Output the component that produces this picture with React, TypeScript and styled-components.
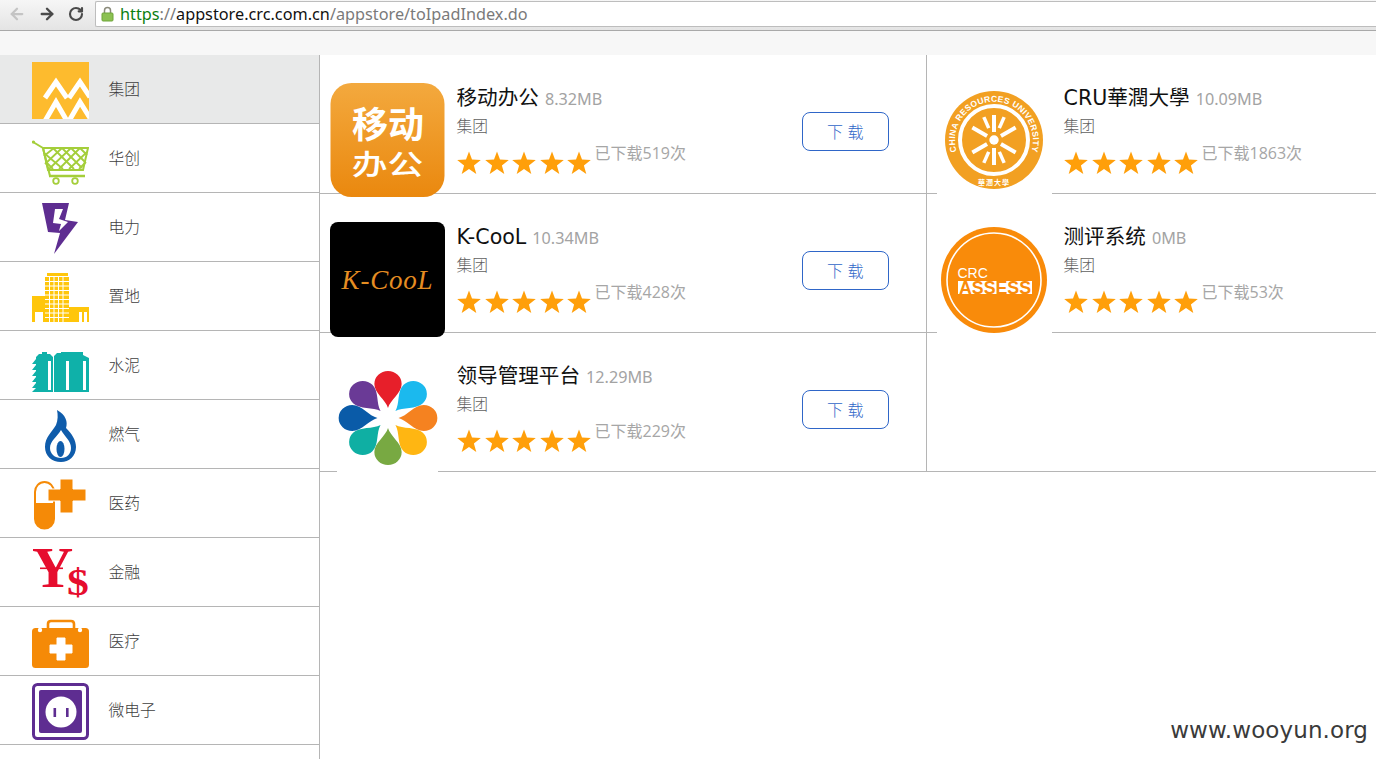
import React from 'react';
import styled, { createGlobalStyle } from 'styled-components';
import { ArrowLeft, ArrowRight, RotateCw } from 'lucide-react';

const Global = createGlobalStyle`
  html, body { margin: 0; padding: 0; height: 100%; overflow: hidden; background: #fff; }
  body { font-family: "Noto Sans CJK SC", "Noto Sans", sans-serif; }
  #root { height: 100%; }
`;

const Page = styled.div`
  position: relative;
  width: 1376px;
  height: 759px;
  overflow: hidden;
  display: flex;
  flex-direction: column;
`;
const Toolbar = styled.div`
  height: 31px;
  flex: none;
  box-sizing: border-box;
  display: flex;
  align-items: flex-start;
  padding: 1px 0 0 8px;
  background: linear-gradient(#f6f6f6, #e4e4e4);
  border-bottom: 1px solid #a9a9a9;
`;
const NavButton = styled.div<{ $w: number; $color: string }>`
  width: ${p => p.$w}px;
  height: 26px;
  display: flex;
  align-items: center;
  color: ${p => p.$color};
`;
const Omnibox = styled.div`
  flex: 1;
  height: 26px;
  box-sizing: border-box;
  background: #fff;
  border: 1px solid #bdbdbd;
  border-right: 0;
  border-radius: 2px 0 0 2px;
  display: flex;
  align-items: center;
  padding-left: 5px;
  gap: 6px;
  font-family: "Noto Sans", sans-serif;
  font-size: 16.25px;
  line-height: 24px;
  color: #7a7a7a;
`;
const Scheme = styled.span` color: #0d7f10; `;
const Host = styled.span` color: #111; `;
const Strip = styled.div`
  height: 24px;
  flex: none;
  background: #f7f7f7;
`;
const Main = styled.div`
  flex: 1;
  display: flex;
  min-height: 0;
`;
const Sidebar = styled.div`
  width: 320px;
  flex: none;
  box-sizing: border-box;
  border-right: 1px solid #b5b5b5;
`;
const SideRow = styled.div<{ $active?: boolean }>`
  height: 69px;
  box-sizing: border-box;
  border-bottom: 1px solid #b5b5b5;
  background: ${p => (p.$active ? '#e8e9e9' : '#fff')};
  display: flex;
  align-items: flex-start;
  padding: 7px 0 0 32px;
  gap: 19.5px;
`;
const SideIcon = styled.svg`
  width: 57px;
  height: 57px;
  flex: none;
`;
const SideLabel = styled.span`
  font-size: 15.75px;
  line-height: 54px;
  color: #404040;
  font-weight: 300;
`;
const Grid = styled.div`
  width: 1056px;
  display: grid;
  grid-template-columns: 607px 449px;
  grid-auto-rows: 139px;
  align-content: start;
`;
const Card = styled.div<{ $left?: boolean }>`
  box-sizing: border-box;
  border-bottom: 1px solid #b5b5b5;
  border-right: ${p => (p.$left ? '1px solid #b5b5b5' : '0')};
  padding: 28px 0 0 10px;
  display: flex;
  align-items: flex-start;
`;
const AppIcon = styled.svg`
  width: 115px;
  height: 115px;
  flex: none;
  position: relative;
  z-index: 1;
`;
const Info = styled.div`
  margin-left: 11.5px;
  display: flex;
  flex-direction: column;
`;
const TitleLine = styled.div`
  height: 28px;
  display: flex;
  align-items: baseline;
  gap: 6px;
  white-space: nowrap;
`;
const Title = styled.span`
  font-family: "DejaVu Sans", "Noto Sans CJK SC", sans-serif;
  font-size: 20.6px;
  line-height: 31px;
  color: #111;
  font-weight: 400;
`;
const Size = styled.span`
  font-family: "Noto Sans", sans-serif;
  font-size: 16.2px;
  color: #a3a3a3;
`;
const Company = styled.div`
  font-size: 15.75px;
  line-height: 30px;
  color: #5f5f5f;
  font-weight: 300;
`;
const RateLine = styled.div`
  display: flex;
  align-items: flex-start;
`;
const Stars = styled.div`
  display: flex;
  gap: 3.5px;
  margin-left: 0.5px;
  margin-top: 10px;
`;
const Star = styled.svg`
  width: 24px;
  height: 24px;
  fill: #ff9f0a;
`;
const Downloads = styled.span`
  margin-left: 3.5px;
  font-family: "Open Sans", "Noto Sans CJK SC", sans-serif;
  font-size: 16px;
  line-height: 24px;
  color: #a6a6a6;
  white-space: nowrap;
`;
const DownloadButton = styled.div`
  margin: 29px 37px 0 auto;
  width: 87px;
  height: 39px;
  box-sizing: border-box;
  border: 1px solid #2f66c8;
  border-radius: 8px;
  padding-bottom: 1px;
  display: flex;
  align-items: center;
  justify-content: center;
  color: #2f66c8;
  font-size: 16px;
  font-weight: 300;
  background: #fff;
  letter-spacing: 0.5px;
`;
const Watermark = styled.div`
  position: absolute;
  right: 8px;
  bottom: 14px;
  font-family: "DejaVu Sans", sans-serif;
  font-size: 23px;
  line-height: 30px;
  color: #3a3a3a;
  letter-spacing: 0.1px;
`;

const purple = '#5e2d91';
const orange = '#f58a07';

const icons: Record<string, React.ReactNode> = {
  group: (
    <>
      <rect width="57" height="57" fill="#fdbb2e" />
      <g fill="none" stroke="#fff" strokeWidth="5">
        <path d="M13 36 L24 20 L35 36 M37 36 L48 20 L58 35" />
        <path d="M13 59 L24 40 L35 59 M37 59 L48 40 L58 56" />
      </g>
    </>
  ),
  cart: (
    <>
      <circle cx="1.5" cy="11" r="1.6" fill="#a4ce3a" />
      <path d="M1 11 L11 17" stroke="#a4ce3a" strokeWidth="2" />
      <path d="M11 17 H56 L51 39 H16 Z" fill="#fff" stroke="#a4ce3a" strokeWidth="2" />
      <g stroke="#a4ce3a" strokeWidth="1.8" fill="none">
        <path d="M12 25 L22 17 M13 33 L30 17 M17 38 L39 17 M27 38 L48 17 M37 38 L55 21 M47 38 L54 31" />
        <path d="M21 17 L42 38 M30 17 L50 37 M39 17 L53 31 M48 17 L55 24 M12 22 L31 38 M14 31 L21 38" />
      </g>
      <path d="M17 45 H53" stroke="#a4ce3a" strokeWidth="2.4" />
      <path d="M11 17 L18 45" stroke="#a4ce3a" strokeWidth="2" />
      <circle cx="24" cy="50" r="2.8" fill="#fff" stroke="#a4ce3a" strokeWidth="1.8" />
      <circle cx="43" cy="50" r="2.8" fill="#fff" stroke="#a4ce3a" strokeWidth="1.8" />
    </>
  ),
  power: (
    <>
      <path d="M10 3 H37 L33 20 L46 22 L22 54 L28 33 L16 32 Z" fill={purple} />
      <path d="M23 9 H31 L27 19 L36 22 L27 31 L29 24 L21 23 Z" fill="#fff" />
    </>
  ),
  land: (
    <>
      <rect x="15" y="4" width="21" height="3" fill="#ffc60b" />
      <rect x="13" y="8" width="24" height="45" fill="#ffc60b" />
      <g stroke="#fff" strokeWidth="1">
        <path d="M17.5 8 V53 M22 8 V53 M26.5 8 V53 M31 8 V53" />
        <path d="M13 12.5 H37 M13 17 H37 M13 21.5 H37 M13 26 H37 M13 30.5 H37 M13 35 H37 M13 39.5 H37 M13 44 H37 M13 48.5 H37" />
      </g>
      <path d="M0 27 H13 V53 H11 V43 H3 V53 H0 Z" fill="#ffc60b" />
      <path d="M37 38 H57 V53 H55 V43 H52 V53 H50 V43 H47 V53 H37 Z" fill="#ffc60b" />
    </>
  ),
  cement: (
    <>
      <path d="M4 19 L7 16 H10 V14 H15 V16 H18 L21 19 V54 H4 Z" fill="#0fb1a9" />
      <path d="M22 18 L25 15 H29 V14 H51 V17 L57 20 V54 H22 Z" fill="#0fb1a9" />
      <g fill="#fff">
        <rect x="16" y="23" width="3" height="29" />
        <rect x="34" y="23" width="3" height="29" />
        <rect x="51" y="23" width="3" height="29" />
      </g>
      <path d="M0 26 L4 21 V26 Z M0 32 L4 27 V32 Z M0 38 L4 33 V38 Z M0 44 L4 39 V44 Z M0 50 L4 45 V50 Z M0 54 L4 50 V54 Z" fill="#0fb1a9" />
    </>
  ),
  gas: (
    <>
      <path d="M25 3 C34 8 36 15 34 21 C40 27 44 33 44 40 C44 49 37 55 29 55 C20 55 13 49 13 40 C13 30 20 25 24 18 C26 13 26 8 25 3 Z" fill="#0f5cab" />
      <path d="M29 23 C33 30 39 34 39 41 C39 47 35 51 29 51 C23 51 18 47 18 41 C18 34 25 30 29 23 Z" fill="#fff" />
      <ellipse cx="28.5" cy="42" rx="4" ry="8" fill="#0f5cab" />
    </>
  ),
  pharma: (
    <>
      <path d="M3 28 V16 A9.5 10 0 0 1 22 16 V28 Z" fill="#fff" stroke={orange} strokeWidth="2" />
      <path d="M2 29 H23 V43 A10.500 10.500 0 0 1 2 43 Z" fill={orange} />
      <path d="M28 3 H41 V13 H54 V25 H41 V37 H28 V25 H16 V13 H28 Z" fill={orange} stroke="#fff" strokeWidth="1" />
    </>
  ),
  finance: (
    <g fill="#e60d2e" fontFamily='"Liberation Serif", serif' fontWeight="700">
      <text x="0" y="41.5" fontSize="57">Y</text>
      <rect x="8" y="22.500" width="23" height="1.600" />
      <text transform="translate(35 50) scale(1.15 1)" fontSize="38">$</text>
    </g>
  ),
  medical: (
    <>
      <path d="M16 15 V10 Q16 7 19 7 H39 Q42 7 42 10 V15" fill="none" stroke={orange} strokeWidth="2.6" />
      <rect x="0" y="14" width="57" height="40" rx="3.500" fill={orange} />
      <circle cx="8" cy="16" r="2.2" fill="#fff" />
      <circle cx="48" cy="16" r="2.2" fill="#fff" />
      <path d="M25 24 H33 V31 H40 V39 H33 V46 H25 V39 H18 V31 H25 Z" fill="#fff" stroke="#fff" strokeLinejoin="round" />
    </>
  ),
  micro: (
    <>
      <rect x="1.500" y="1.500" width="54" height="54" rx="4" fill="#fff" stroke={purple} strokeWidth="3" />
      <rect x="7" y="7" width="43" height="43" rx="2" fill={purple} />
      <circle cx="29" cy="29" r="15.500" fill="#fff" />
      <rect x="21.500" y="25" width="2.600" height="9" fill={purple} />
      <rect x="34" y="25" width="2.600" height="9" fill={purple} />
    </>
  ),
};

const categories = [
  ['group', '集团'], ['cart', '华创'], ['power', '电力'], ['land', '置地'], ['cement', '水泥'],
  ['gas', '燃气'], ['pharma', '医药'], ['finance', '金融'], ['medical', '医疗'], ['micro', '微电子'],
];

const petals = ['#e71f2a', '#1bb9ee', '#f58220', '#ffb612', '#78a942', '#0fafa3', '#0a5ba8', '#6a3a96'];

const mainSpokes = [0, 60, 120, 180, 240, 300];
const sideSpokes = [24, 156, 204, 336];

const appIcons: Record<string, React.ReactNode> = {
  office: (
    <>
      <defs>
        <linearGradient id="officeFill" x1="0" y1="0" x2="0" y2="1">
          <stop offset="0" stopColor="#f3a93e" />
          <stop offset="1" stopColor="#ea880e" />
        </linearGradient>
      </defs>
      <rect x="0.500" width="114" height="114" rx="21" fill="url(#officeFill)" />
      <g fill="#fff" fontFamily='"Noto Sans CJK SC", sans-serif' fontWeight="700" textAnchor="middle">
        <text x="58" y="55" fontSize="36">移动</text>
        <text transform="translate(57.500 92) scale(1.28 1)" fontSize="28" fontWeight="500">办公</text>
      </g>
    </>
  ),
  kcool: (
    <>
      <rect width="115" height="115" rx="8" fill="#000" />
      <text x="57.500" y="67" textAnchor="middle" fontFamily='"Liberation Serif", serif' fontStyle="italic" fontSize="27" letterSpacing="0.800" fill="#e58d22">K-CooL</text>
    </>
  ),
  leader: (
    <>
      <rect x="7" width="101" height="115" fill="#fff" />
      <g transform="translate(58 57) scale(1.05 1)">
        {petals.map((c, i) => (
          <path key={c} transform={`rotate(${i * 45})`} fill={c} d="M0 -10 C-2 -18 -13 -25 -13 -34 A13 13 0 1 1 13 -34 C13 -25 2 -18 0 -10 Z" />
        ))}
      </g>
    </>
  ),
  cru: (
    <>
      <rect width="115" height="115" fill="#fff" />
      <circle cx="57" cy="57" r="49" fill="#f2a022" />
      <circle cx="57" cy="57" r="34" fill="#f2a022" stroke="#fff" strokeWidth="4" />
      <defs>
        <path id="cruArc" d="M20 70 A39 39 0 1 1 94 70" />
      </defs>
      <text fontFamily='"Liberation Sans", sans-serif' fontSize="8.5" fontWeight="700" fill="#fff" letterSpacing="0.300">
        <textPath href="#cruArc" startOffset="50%" textAnchor="middle">CHINA RESOURCES UNIVERSITY</textPath>
      </text>
      <text x="57" y="102" textAnchor="middle" fontFamily='"Noto Sans CJK TC", sans-serif' fontSize="7" fontWeight="700" fill="#fff" letterSpacing="1">華潤大學</text>
      <g transform="translate(57 57)" stroke="#fff" fill="none">
        {mainSpokes.map(a => (
          <path key={a} transform={`rotate(${a})`} d="M0 -8 V-25" strokeWidth="4" />
        ))}
        {sideSpokes.map(a => (
          <path key={a} transform={`rotate(${a})`} d="M0 -13 V-25" strokeWidth="3.500" />
        ))}
      </g>
      <circle cx="57" cy="57" r="4.700" fill="#fff" />
    </>
  ),
  assess: (
    <>
      <rect width="115" height="115" fill="#fff" />
      <circle cx="57" cy="58" r="53" fill="#f98b0a" />
      <circle cx="57" cy="58" r="47" fill="none" stroke="#fff" strokeWidth="1.600" />
      <text x="20.500" y="56" fontFamily='"Liberation Sans", sans-serif' fontSize="14" fill="#fff">CRC</text>
      <rect x="21" y="59" width="74" height="13" fill="#fff" />
      <text x="22" y="71.500" fontFamily='"Liberation Sans", sans-serif' fontSize="18" fontWeight="700" fill="#f98b0a" textLength="72" lengthAdjust="spacingAndGlyphs">ASSESS</text>
    </>
  ),
};

const apps = [
  { icon: 'office', name: '移动办公', size: '8.32MB', count: '已下载519次', btn: true },
  { icon: 'cru', name: 'CRU華潤大學', size: '10.09MB', count: '已下载1863次', btn: false },
  { icon: 'kcool', name: 'K-CooL', size: '10.34MB', count: '已下载428次', btn: true },
  { icon: 'assess', name: '测评系统', size: '0MB', count: '已下载53次', btn: false },
  { icon: 'leader', name: '领导管理平台', size: '12.29MB', count: '已下载229次', btn: true },
];

const StarIcon = () => (
  <Star viewBox="0 0 24 24">
    <path d="M12 0.500 L15 8.600 L23.800 9 L16.900 14.400 L19.300 23 L12 18.100 L4.700 23 L7.100 14.400 L0.200 9 L9 8.600 Z" />
  </Star>
);

export default function App() {
  return (
    <Page>
      <Global />
      <Toolbar>
        <NavButton $w={30} $color="#c4c4c4"><ArrowLeft size={18} strokeWidth={3} /></NavButton>
        <NavButton $w={30} $color="#4a4a4a"><ArrowRight size={18} strokeWidth={3.2} /></NavButton>
        <NavButton $w={27} $color="#4a4a4a"><RotateCw size={16} strokeWidth={3.2} /></NavButton>
        <Omnibox>
          <svg width="13" height="16" viewBox="0 0 13 16">
            <path d="M3.500 7 V4.500 A3 3 0 0 1 9.500 4.500 V7" fill="none" stroke="#8a8a7a" strokeWidth="1.500" />
            <rect x="1" y="7" width="11" height="8" rx="1" fill="#8cc152" stroke="#6fa53a" />
          </svg>
          <span><Scheme>https</Scheme>://<Host>appstore.crc.com.cn</Host>/appstore/toIpadIndex.do</span>
        </Omnibox>
      </Toolbar>
      <Strip />
      <Main>
        <Sidebar>
          {categories.map(([key, label], i) => (
            <SideRow key={key} $active={i === 0}>
              <SideIcon viewBox="0 0 57 57">{icons[key]}</SideIcon>
              <SideLabel>{label}</SideLabel>
            </SideRow>
          ))}
        </Sidebar>
        <Grid>
          {apps.map((a, i) => (
            <Card key={a.icon} $left={i % 2 === 0}>
              <AppIcon viewBox="0 0 115 115">{appIcons[a.icon]}</AppIcon>
              <Info>
                <TitleLine>
                  <Title>{a.name}</Title>
                  <Size>{a.size}</Size>
                </TitleLine>
                <Company>集团</Company>
                <RateLine>
                  <Stars>{[0, 1, 2, 3, 4].map(s => <StarIcon key={s} />)}</Stars>
                  <Downloads>{a.count}</Downloads>
                </RateLine>
              </Info>
              {a.btn && <DownloadButton>下 载</DownloadButton>}
            </Card>
          ))}
          <Card />
        </Grid>
      </Main>
      <Watermark>www.wooyun.org</Watermark>
    </Page>
  );
}
